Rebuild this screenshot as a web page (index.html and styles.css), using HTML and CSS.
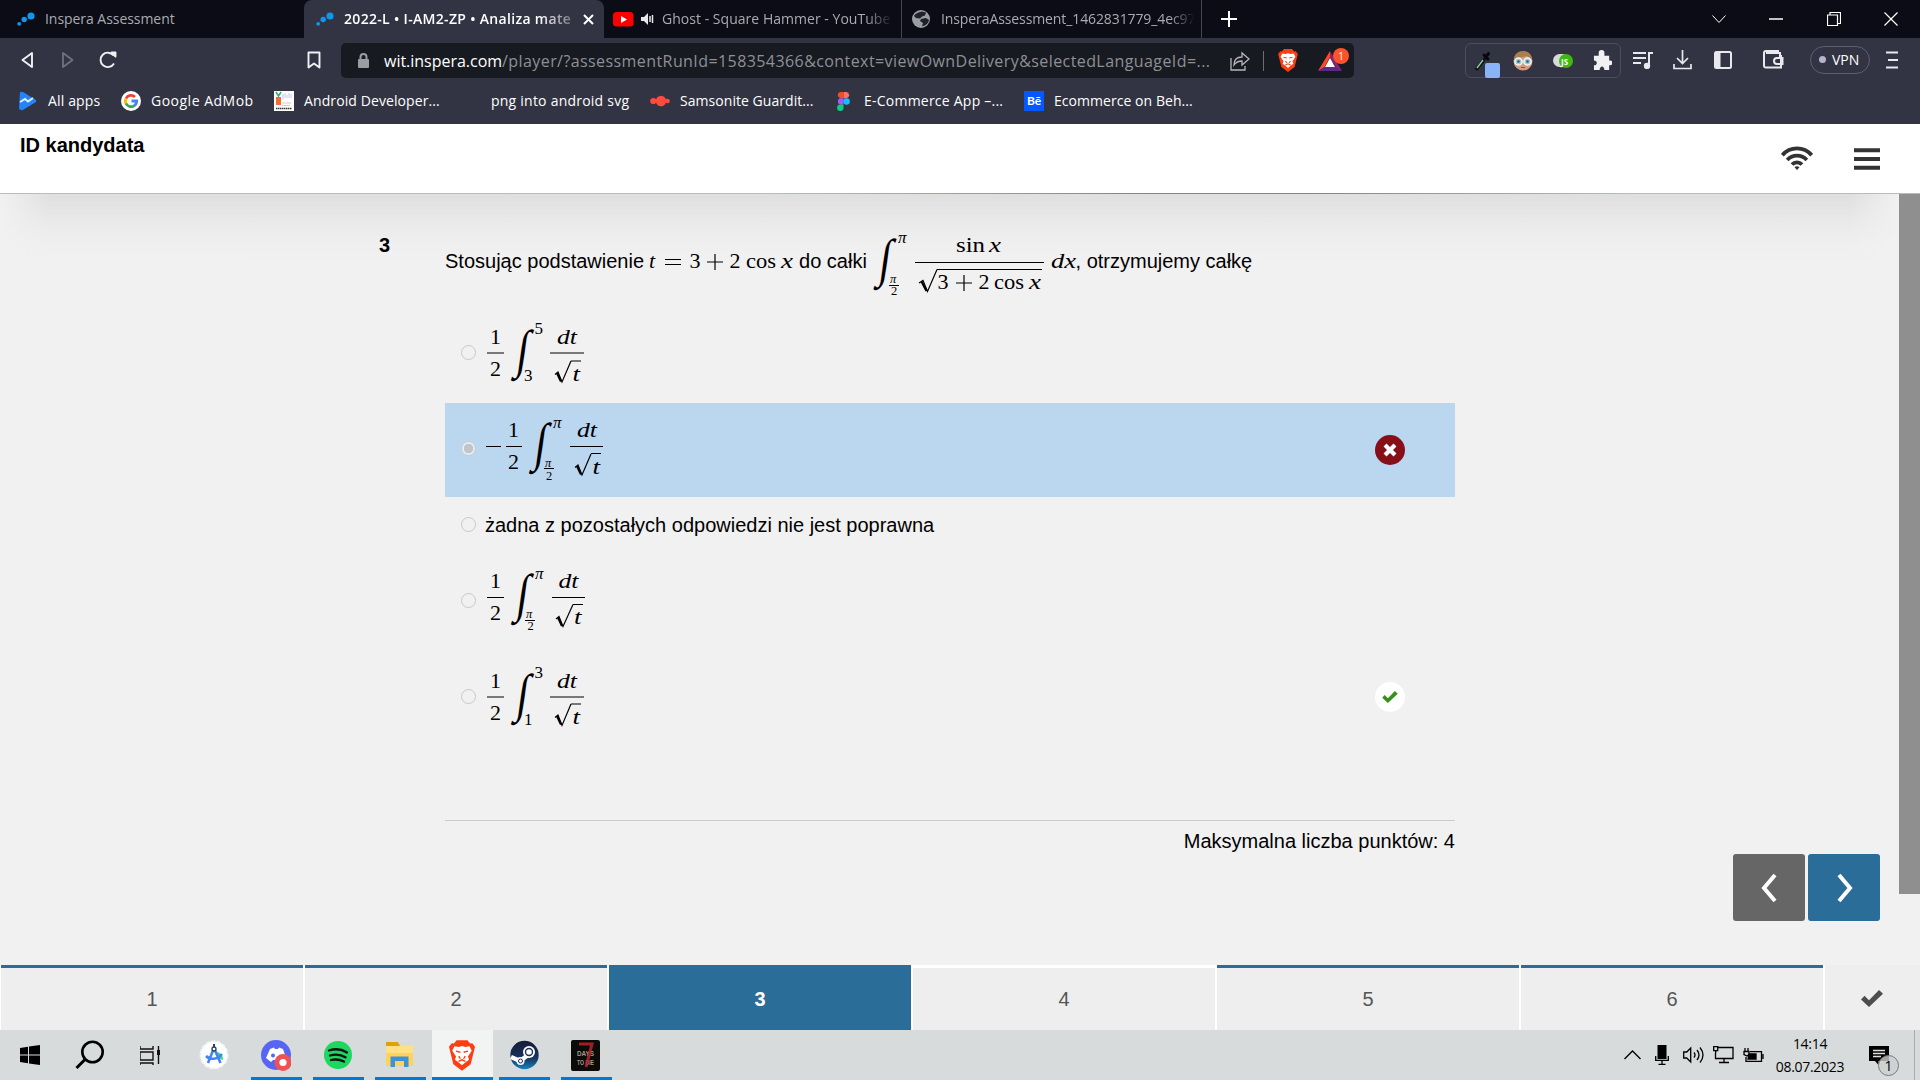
FILE: index.html
```html
<!DOCTYPE html>
<html lang="pl">
<head>
<meta charset="utf-8">
<title>Inspera Assessment</title>
<link rel="stylesheet" href="styles.css">
</head>
<body>
<svg class="defs" width="0" height="0">
  <symbol id="dots" viewBox="0 0 18 14"><circle cx="14" cy="4" r="3.6"/><circle cx="7.2" cy="7.5" r="2.7"/><circle cx="2.2" cy="11.8" r="1.9"/></symbol>
  <symbol id="lion" viewBox="0 0 24 28"><path fill="#fb3f12" d="M7 0h10l2.500 3 2-.3L24 6l-1 4-3 12-8 6-8-6L1 10 0 6l2.500-3.300 2 .3z"/><path fill="#fff" d="M5 5.500l4 .7 3-1 3 1 4-.7 2 4-3.500 5.500 1 3-3.500 2.500-3 2.500-3-2.500L5.500 18l1-3L3 9.500z"/><path fill="none" stroke="#fb3f12" stroke-width="1.300" d="M6.500 10l4 1M17.500 10l-4 1M9 14.500l1.500 2.500M15 14.500 13.500 17M8.800 19.500l3.200-1.500 3.200 1.500"/></symbol>
  <symbol id="check" viewBox="0 0 22 17"><path d="M0 9.500 3.500 5.800 8 10.200 18 0 22 3.800 8 17z"/></symbol>
</svg>

<header class="browser">
  <div class="tabs">
    <div class="tab tab-first"><svg class="dots" width="18" height="14"><use href="#dots"/></svg><span class="label">Inspera Assessment</span></div>
    <div class="tab tab-active"><svg class="dots" width="18" height="14"><use href="#dots"/></svg><span class="label">2022-L • I-AM2-ZP • Analiza mate</span>
      <svg width="11" height="11" viewBox="0 0 11 11" stroke="#fff" stroke-width="2"><path d="M1 1l9 9M10 1l-9 9"/></svg></div>
    <div class="tab tab-yt"><svg width="21" height="15"><rect width="20.500" height="14.500" rx="3.500" fill="#f00"/><path d="M8 4v7l6-3.500z" fill="#fff"/></svg>
      <svg class="speaker" width="13" height="12" viewBox="0 0 13 12"><path fill="#e8e8ea" d="M0 4h3l4-4v12L3 8H0z"/><path d="M9 3v6M11.500 2v8" stroke="#e8e8ea" stroke-width="1.500"/></svg><span class="label">Ghost - Square Hammer - YouTube</span></div>
    <div class="tab tab-file"><svg width="18" height="18"><circle cx="9" cy="9" r="9" fill="#9b9da5"/><path fill="#0b0c15" d="M10 1.500l4 1-1 3-3 1-2 2-4-.5-2-2C4 2.500 8 2 10 1.500zM9 9l5-1 3 2c-1 4-4 6-7 6l1-3-3-2z" opacity=".85"/></svg><span class="label">InsperaAssessment_1462831779_4ec97</span></div>
    <svg class="plus" width="16" height="16" stroke="#fff" stroke-width="2"><path d="M8 0v16M0 8h16"/></svg>
    <div class="window-buttons">
      <svg width="14" height="8"><path d="M.5.5 7 7.500 13.500.5"/></svg>
      <svg width="14" height="2"><path d="M0 1h14" stroke-width="1.500"/></svg>
      <svg width="14" height="14"><path d="M.5 3h10v10.500H.5zM3 3V.5h10.500v11H10.500" stroke-width="1.200"/></svg>
      <svg width="14" height="14"><path d="M.5.5l13 13M13.500.5l-13 13" stroke-width="1.200"/></svg>
    </div>
  </div>

  <div class="toolbar">
    <div class="nav-buttons">
      <svg width="12" height="18" viewBox="0 0 12 18"><path d="M11 2v14L1.500 9z"/></svg>
      <svg class="dim" width="12" height="18" viewBox="0 0 12 18"><path d="M1 2v14L10.500 9z"/></svg>
      <svg width="18" height="18" viewBox="0 0 18 18"><path d="M15 12.500A7.200 7.200 0 1 1 14.500 4.500"/><path d="M12.500 1.500h4v4z" fill="#fff"/></svg>
      <svg class="bookmark" width="14" height="18" viewBox="0 0 14 18"><path d="M1.500 1.500h11v15L7 12.500l-5.500 4z"/></svg>
    </div>
    <div class="address">
      <svg width="11" height="15" viewBox="0 0 11 15"><rect y="6" width="11" height="9" rx="1" fill="#9b9da5"/><path d="M2.500 7V4a3 3 0 0 1 6 0v3" fill="none" stroke="#9b9da5" stroke-width="2"/></svg>
      <span class="url"><b>wit.inspera.com</b>/player/?assessmentRunId=158354366&amp;context=viewOwnDelivery&amp;selectedLanguageId=...</span>
      <svg class="share" width="20" height="20" viewBox="0 0 20 20" fill="none" stroke="#b5b6bb" stroke-width="1.300"><path d="M1 7v12h14v-4"/><path d="M4 14c0-5 3-8 8-8V2l7 6-7 6v-4c-4 0-6 1-8 4z"/></svg>
      <i class="bar"></i>
      <svg class="shield" width="20" height="23"><use href="#lion"/></svg>
      <div class="rewards"><svg width="24" height="20" viewBox="0 0 24 20"><path fill="#ff4724" d="M12 0v6L6 17l-6 3z"/><path fill="#8d1d76" d="M12 0l12 20-6-3-6-10z"/><path fill="#5b2a83" d="M0 20l6-4h12l6 4z"/><path fill="#fff" d="M12 7l5 9H7z"/></svg><span class="count">1</span></div>
    </div>
    <div class="extensions">
      <div class="dropper"><svg width="20" height="22" viewBox="0 0 20 22"><path d="M3 20 13 7" stroke="#111" stroke-width="3"/><path d="M4 18l6-8" stroke="#8fd9a0" stroke-width="1.300"/><path d="M11 5l4 4M13.500 6l2-2.500" stroke="#08080c" stroke-width="3" stroke-linecap="round"/></svg><i class="swatch"></i></div>
      <svg width="20" height="20" viewBox="0 0 20 20"><circle cx="10" cy="10" r="9.500" fill="#d69b78"/><path fill="#a9804d" d="M1 9C1-3 19-3 19 9L14 5 5 7z"/><g fill="#9fc9d4" stroke="#eef7fa" stroke-width="1.500"><circle cx="5.500" cy="10.500" r="3.600"/><circle cx="14.500" cy="10.500" r="3.600"/></g><circle cx="5.500" cy="10.500" r="1.300" fill="#355e70"/><circle cx="14.500" cy="10.500" r="1.300" fill="#355e70"/><path d="M8 16.500h4" stroke="#934f3d"/></svg>
      <svg width="20" height="16" viewBox="0 0 20 16"><rect y="1" width="16" height="13" rx="6.500" fill="#d8d9d8"/><circle cx="13" cy="8" r="7" fill="#3fb90f"/><text x="8" y="11.500" class="js">JS</text></svg>
      <svg width="19" height="21" viewBox="0 0 20 22"><path fill="#f1f1f3" d="M1 6h5V3a3 3 0 0 1 6 0v3h5v5h1a2.500 2.500 0 0 1 0 5h-1v5h-5c0-5-5-5-5 0H1v-5c4 0 4-5 0-5z"/></svg>
    </div>
    <div class="tools">
      <svg class="t-music" width="21" height="18" viewBox="0 0 21 18"><path d="M0 2h13M0 7h13M0 12h8M16 14V2h4" /><circle cx="14" cy="15" r="2.200" fill="#eee"/></svg>
      <svg class="t-down" width="19" height="20" viewBox="0 0 19 20"><path d="M9.500 0v13M4 8l5.500 5.500L15 8M1 14v4.500h17V14"/></svg>
      <svg class="t-side" width="18" height="18" viewBox="0 0 18 18"><rect x="1" y="1" width="16" height="16" rx="1.500"/><path d="M4 1v16" stroke-width="5"/></svg>
      <svg class="t-wallet" width="21" height="19" viewBox="0 0 21 19"><path d="M3 3h14v3h1v11.500H3A2 2 0 0 1 1 15V3a2 2 0 0 1 2-2h12v2M19.500 8H14a2.500 2.500 0 0 0 0 6h5.500z"/></svg>
      <span class="vpn"><i></i>VPN</span>
      <svg class="t-menu" width="12" height="18" viewBox="0 0 12 18"><path d="M0 1.500h12M2 9h10M0 16.500h12"/></svg>
    </div>
  </div>

  <nav class="bookmarks">
    <a class="bm bm-apps"><svg width="18" height="20" viewBox="0 0 18 20"><path d="M1 1l3 0 13 8v2L3 19.500 0 18z" fill="#2583fa"/><path d="M1 11l5-3 3 2.500L14 7" fill="none" stroke="#dff0ff" stroke-width="2"/></svg><span>All apps</span></a>
    <a class="bm bm-admob"><svg width="20" height="20"><circle cx="10" cy="10" r="10" fill="#fff"/><g fill="none" stroke-width="2.800"><path stroke="#ea4335" d="M5 7.500a5.600 5.600 0 0 1 9-1.500"/><path stroke="#fbbc05" d="M5.200 13a5.600 5.600 0 0 1-.2-5.500"/><path stroke="#34a853" d="M13.500 14.500A5.600 5.600 0 0 1 5 12.500"/><path stroke="#4285f4" d="M10.500 10h5.200c0 2-.8 3.600-2.400 4.700"/></g></svg><span>Google AdMob</span></a>
    <a class="bm bm-dev"><svg width="20" height="20"><path fill="#fff" d="M0 0h20v20H0z"/><path fill="#f26b3a" d="M2 6h5v8H2z"/><path d="M2 1l2.500 4L7 1" fill="none" stroke="#39a96b" stroke-width="1.500"/><path d="M9 3v5M11 2v5M13 4v3M15 2v5M17 3v4" stroke="#c3cbef"/><path d="M8 12h9M8 14.500h8" stroke="#d9c9c0"/><path d="M2 17.500h16" stroke="#333" stroke-width="1.600" stroke-dasharray="1.500 .5"/></svg><span>Android Developer...</span></a>
    <a class="bm bm-png"><span>png into android svg</span></a>
    <a class="bm bm-sam"><svg width="20" height="12" fill="#ff4a3d"><circle cx="3.300" cy="6" r="3.100"/><circle cx="11" cy="6" r="5.200"/><circle cx="17.500" cy="6" r="2.300"/><path d="M2 5h15v2H2z"/></svg><span>Samsonite Guardit...</span></a>
    <a class="bm bm-figma"><svg width="13" height="19" viewBox="0 0 13 19"><path fill="#f24e1e" d="M6.500 0h-3a3.200 3.200 0 0 0 0 6.300h3z"/><path fill="#ff7262" d="M6.500 0h3a3.200 3.200 0 0 1 0 6.300h-3z"/><path fill="#a259ff" d="M6.500 6.300h-3a3.200 3.200 0 0 0 0 6.300h3z"/><circle cx="9.600" cy="9.500" r="3.200" fill="#1abcfe"/><path fill="#0acf83" d="M6.500 12.600h-3a3.200 3.200 0 1 0 3 3.200z"/></svg><span>E-Commerce App –...</span></a>
    <a class="bm bm-be"><b class="be">Bē</b><span>Ecommerce on Beh...</span></a>
  </nav>
</header>

<div class="idbar">
  <h1>ID kandydata</h1>
  <svg class="wifi" width="32" height="24" viewBox="0 0 32 24" fill="none" stroke="#333" stroke-width="3.800"><path d="M1.300 9.200C9 .1 23 .1 30.700 9.200M6.200 14c5.200-5.800 14.400-5.800 19.600 0M11 18.600c2.600-2.900 7.400-2.900 10 0"/><path d="M16 24l-2.500-2.800c1.400-1.300 3.600-1.300 5 0z" fill="#333" stroke="none"/></svg>
  <svg width="26" height="22" viewBox="0 0 26 22"><path d="M0 2.200h26M0 11h26M0 19.800h26" stroke="#333" stroke-width="4"/></svg>
</div>

<main class="page">
  <div class="content">
    <div class="question">
      <b class="number">3</b>
      <section class="body">
        <p class="prompt"><span>Stosując podstawienie</span>
          <svg class="math first" width="150" height="64" viewBox="647 233 150 64"><g class="r"><text class="it" x="649" y="268" textLength="7">t</text><text x="689.500" y="268">3</text><text x="729.500" y="268">2</text><text x="746" y="268" textLength="30" lengthAdjust="spacingAndGlyphs">cos</text><text class="it" x="781" y="268" textLength="12" lengthAdjust="spacingAndGlyphs">x</text></g><path d="M665 259.500h16M665 264.500h16M707 262h16M715 254v16"/></svg>
          <span class="do">do całki</span>
          <svg class="math" width="203" height="64" viewBox="872 233 203 64"><text class="int" transform="translate(876.500 275.500) skewX(-8) scale(.85 1.060)">∫</text><g class="s"><text class="it" x="897" y="243">π</text></g><g class="ss"><text class="it" x="889" y="283">π</text><text x="890" y="295">2</text></g><path d="M888 285.500h10M914 262.500h129M936 269.500h105M955 283h16M963 275v16"/><g class="r"><text x="955" y="252" textLength="29" lengthAdjust="spacingAndGlyphs">sin</text><text class="it" x="988" y="252" textLength="12" lengthAdjust="spacingAndGlyphs">x</text><text x="936.500" y="289">3</text><text x="977.500" y="289">2</text><text x="993" y="289" textLength="30" lengthAdjust="spacingAndGlyphs">cos</text><text class="it" x="1028" y="289" textLength="12" lengthAdjust="spacingAndGlyphs">x</text><text class="it" x="1050" y="268" textLength="25" lengthAdjust="spacingAndGlyphs">dx</text></g><path class="root" d="M918 283l4-2.500 4.500 11 9.500-22"/><path class="rootfat" d="M920.500 281.500l5 9.500"/></svg>
          <span>, otrzymujemy całkę</span></p>

        <div class="option o1"><i class="radio"></i>
          <svg class="math" width="102" height="62" viewBox="485 321.500 102 62"><g class="r"><text x="490" y="344">1</text><text x="490" y="376">2</text><text class="it" x="557" y="344" textLength="20" lengthAdjust="spacingAndGlyphs">dt</text><text class="it" x="572.500" y="381" textLength="7.500" lengthAdjust="spacingAndGlyphs">t</text></g><text class="int" transform="translate(515 367) skewX(-8) scale(.85 1.060)">∫</text><g class="s"><text x="534.500" y="334">5</text><text x="524" y="381">3</text></g><path d="M487 353.500h17M550 353.500h34M571 361.500h10"/><path class="root" d="M555 375l3-2.500 4 10 9-21"/><path class="rootfat" d="M557 373.500l4 8.500"/></svg></div>

        <div class="option o2"><i class="radio on"></i>
          <svg class="math" width="122" height="62" viewBox="485 418.500 122 62"><g class="r"><text x="508" y="437">1</text><text x="508" y="469">2</text><text class="it" x="577" y="437" textLength="20" lengthAdjust="spacingAndGlyphs">dt</text><text class="it" x="592.500" y="474" textLength="7.500" lengthAdjust="spacingAndGlyphs">t</text></g><text class="int" transform="translate(533 460) skewX(-8) scale(.85 1.060)">∫</text><g class="s"><text class="it" x="553" y="428">π</text></g><g class="ss"><text class="it" x="545" y="467">π</text><text x="546" y="480">2</text></g><path d="M486 447h15M506 447h16M570 447h33M591 454h10M544 469h10"/><path class="root" d="M575 468l3-2.500 4 10 9-21"/><path class="rootfat" d="M577 466.500l4 8.500"/></svg>
          <span class="mark wrong"><svg width="14" height="14"><path d="M3.500 3.500l7 7M10.500 3.500l-7 7" stroke="#fff" stroke-width="4.200" stroke-linecap="square"/></svg></span></div>

        <div class="option o3"><i class="radio"></i><span>żadna z pozostałych odpowiedzi nie jest poprawna</span></div>

        <div class="option o4"><i class="radio"></i>
          <svg class="math" width="102" height="64" viewBox="485 570 102 64"><g class="r"><text x="490" y="589">1</text><text x="490" y="621">2</text><text class="it" x="558.500" y="589" textLength="20" lengthAdjust="spacingAndGlyphs">dt</text><text class="it" x="574" y="625" textLength="7.500" lengthAdjust="spacingAndGlyphs">t</text></g><text class="int" transform="translate(515 612) skewX(-8) scale(.85 1.060)">∫</text><g class="s"><text class="it" x="535" y="580">π</text></g><g class="ss"><text class="it" x="526" y="619">π</text><text x="527.500" y="631">2</text></g><path d="M487 598.500h17M552 598.500h33M573 605.500h10M525 621.500h10"/><path class="root" d="M556 620l3-2.500 4 10 10-22"/><path class="rootfat" d="M558 618.500l4 8.500"/></svg></div>

        <div class="option o5"><i class="radio"></i>
          <svg class="math" width="102" height="62" viewBox="485 666.500 102 62"><g class="r"><text x="490" y="688">1</text><text x="490" y="720">2</text><text class="it" x="557" y="688" textLength="20" lengthAdjust="spacingAndGlyphs">dt</text><text class="it" x="572.500" y="724" textLength="7.500" lengthAdjust="spacingAndGlyphs">t</text></g><text class="int" transform="translate(515 711) skewX(-8) scale(.85 1.060)">∫</text><g class="s"><text x="534.500" y="678">3</text><text x="524" y="725">1</text></g><path d="M487 697.500h17M550 697.500h34M571 704.500h10"/><path class="root" d="M555 718l3-2.500 4 10.500 9-21.500"/><path class="rootfat" d="M557 716.500l4 8.500"/></svg>
          <span class="mark right"><svg width="16" height="12" fill="#37901a"><use href="#check"/></svg></span></div>

        <p class="points">Maksymalna liczba punktów: 4</p>
      </section>
    </div>
    <div class="pager">
      <button class="prev"><svg width="18" height="30" viewBox="0 0 18 30"><path d="M15 2 4 15l11 13"/></svg></button>
      <button class="next"><svg width="18" height="30" viewBox="0 0 18 30"><path d="M4 2l11 13L4 28"/></svg></button>
    </div>
  </div>
  <div class="scroll"><div class="thumb"></div></div>
</main>

<nav class="steps">
  <a class="step">1</a><a class="step">2</a><a class="step current">3</a><a class="step empty">4</a><a class="step">5</a><a class="step">6</a>
  <a class="finish"><svg width="22" height="17" fill="#4d4d4d"><use href="#check"/></svg></a>
</nav>

<footer class="taskbar">
  <div class="apps">
    <span class="sys"><svg width="20" height="20"><path d="M0 3l8-1.200V9.500H0zM9 1.600 20 0v9.500H9zM0 10.500h8v7.700L0 17zM9 10.500h11V20L9 18.400z"/></svg></span>
    <span class="sys s-search"><svg width="30" height="30" fill="none" stroke="#000"><circle cx="17.500" cy="12" r="10.200" stroke-width="2.600"/><path d="M10 19.500 1.500 28" stroke-width="3"/></svg></span>
    <span class="sys s-task"><svg width="20" height="20" fill="none" stroke="#111" stroke-width="1.400"><path d="M0 1v3h13V1M0 7h13v8H0zM0 20v-2h13v2M18.500 1v18"/><path d="M18.500 5v5" stroke-width="3"/></svg></span>
    <span class="sys s-studio"><svg width="30" height="30"><circle cx="15" cy="15" r="13.500" fill="#fff" stroke="#f4f6f6" stroke-width="2" stroke-dasharray="4 1.500"/><path fill="#3ddc84" d="M17 12a7 7 0 0 1 7 8l-6-2z"/><path d="M15 8 9 23M15 8l6.500 15M7 16c4 4 11 4 16-2" fill="none" stroke="#4285f4" stroke-width="2.600"/><path d="M15 4v5" stroke="#243f68" stroke-width="2"/><circle cx="15" cy="9" r="2" fill="#fff" stroke="#243f68" stroke-width="1.300"/></svg></span>
    <span class="app"><svg width="30" height="31"><circle cx="15" cy="15" r="15" fill="#5865f2"/><path fill="#fff" d="M9 9l4-1.500 1 1.500h3l1-1.500L22 9l3 9-4 4-2-2h-7l-2 2-5-4z"/><circle cx="12" cy="15.500" r="2" fill="#5865f2"/><circle cx="22" cy="22.500" r="8.500" fill="#ed5255"/><circle cx="22" cy="22.500" r="3.600" fill="#fff"/></svg></span>
    <span class="app"><svg width="28" height="30"><circle cx="14" cy="15" r="14" fill="#1ed760"/><path d="M5 10.500c6-2 13-1.200 18 2M6 15.500c5-1.500 11-1 15.500 1.800M7 20c4.500-1 9-.5 13 1.600" fill="none" stroke="#111" stroke-width="2.300" stroke-linecap="round"/></svg></span>
    <span class="app"><svg width="28" height="26"><path fill="#dda10f" d="M0 0h12l2 4H0z"/><path fill="#ffd35a" d="M0 4h27v20H0z"/><path fill="#ffe083" d="M0 4h27v7H0z"/><path fill="#3f91d8" d="M4.500 25V14.500h18V25h-4.500v-6h-9v6z"/></svg></span>
    <span class="app brave"><svg width="26" height="31"><use href="#lion"/></svg></span>
    <span class="app"><svg width="29" height="30"><defs><linearGradient id="sg" x2="0" y2="1"><stop offset="0" stop-color="#171d35"/><stop offset=".6" stop-color="#16335f"/><stop offset="1" stop-color="#1483be"/></linearGradient></defs><circle cx="14.500" cy="15" r="14.200" fill="url(#sg)"/><path d="M1 17l9 4 8-6" stroke="#fff" stroke-width="4.500" fill="none"/><circle cx="19" cy="12" r="6" fill="#fff"/><circle cx="19" cy="12" r="3.500" fill="#fff" stroke="#17315c" stroke-width="1.400"/><circle cx="10.500" cy="21" r="4" fill="#fff"/><circle cx="10.500" cy="21" r="2" fill="none" stroke="#17315c"/></svg></span>
    <span class="app"><svg width="30" height="31"><rect width="29" height="31" rx="2" fill="#0b0b0a"/><text class="days" x="6" y="16" textLength="17" lengthAdjust="spacingAndGlyphs">DAYS</text><text class="days" x="6" y="25" textLength="17" lengthAdjust="spacingAndGlyphs">TO DIE</text><path d="M8 4h13L15 27" fill="none" stroke="#b8252a" stroke-width="3" opacity=".85"/></svg></span>
  </div>
  <div class="tray">
    <svg class="i-up" width="17" height="10"><path d="M.5 9 8.500 1l8 8"/></svg>
    <svg class="i-mic" width="14" height="20"><path d="M2.500 0h9v14h-9z" fill="#000" stroke="none"/><path d="M.7 11v4.300h12.600V11M7 15v4M3.500 19.300h7"/></svg>
    <svg class="i-vol" width="21" height="18"><path d="M.7 6h3l4-4v14l-4-4h-3zM11 6.500q2 2.500 0 5M14 4q4 5 0 10M17 1.500q6 7.500 0 15"/></svg>
    <svg class="i-net" width="21" height="18"><path d="M5 1.500h15v11H2.500V7M11 12v4M6 16.500h10M.7.700h4v4h-4zM2.700 4v3"/></svg>
    <svg class="i-bat" width="21" height="15"><path d="M7 3.700h11.500v9.600H3V9M20 6v5M1 3.500h5v3L4 8 1 6.500zM2 0v3M5 0v3"/><path d="M6 6h7v5H5z" fill="#000"/></svg>
    <div class="clock"><span>14:14</span><span>08.07.2023</span></div>
    <div class="notice"><svg width="20" height="19"><path d="M0 0h20v15H9.500V19L6 15H0z" fill="#000" stroke="none"/><path d="M4 4.500h12M4 7.500h12M4 10.500h8" stroke="#ddd"/></svg><b>1</b></div>
    <i class="peek"></i>
  </div>
</footer>
</body>
</html>
```
FILE: styles.css
```css
* { box-sizing: border-box; }
html, body { margin: 0; width: 1920px; height: 1080px; overflow: hidden; }
body { display: flex; flex-direction: column; background: #f1f1f1; color: #000; font-family: "Liberation Sans", Arial, sans-serif; font-size: 20px; }
svg { display: block; flex: none; }
.defs { position: absolute; }
p, h1 { margin: 0; }

/* browser window */
.browser { flex: none; height: 124px; background: #323443; color: #fff; font-family: "Open Sans", "Noto Sans", sans-serif; font-size: 14px; }
.tabs { display: flex; height: 38px; background: #0b0c15; align-items: stretch; }
.tab { display: flex; align-items: center; flex: none; color: #a9abb2; white-space: nowrap; }
.tab .label { overflow: hidden; height: 22px; line-height: 21px; }
.dots { fill: #0f97ec; margin-right: 10px; }
.tab-first { width: 304px; padding-left: 17px; }
.tab-first .label { letter-spacing: -.05px; }
.tab-active { width: 300px; padding-left: 12px; background: #323443; border-radius: 8px 8px 0 0; color: #fff; font-weight: 600; }
.tab-active .label { width: 229px; margin-right: 10px; letter-spacing: .32px; mask-image: linear-gradient(90deg, #000 85%, rgba(0, 0, 0, .3)); }
.tab-yt { width: 298px; padding-left: 9px; border-right: 1px solid #44454d; }
.speaker { margin: 0 8px 0 7px; }
.tab-yt .label { width: 231px; letter-spacing: .03px; mask-image: linear-gradient(90deg, #000 88%, transparent); }
.tab-file { width: 300px; padding-left: 10px; border-right: 1px solid #44454d; }
.tab-file .label { width: 254px; margin-left: 11px; letter-spacing: -.1px; mask-image: linear-gradient(90deg, #000 90%, transparent); }
.plus { margin: 11px 0 0 19px; }
.window-buttons { display: flex; align-items: center; gap: 43.500px; margin: 0 22px 0 auto; fill: none; stroke: #fff; }

.toolbar { display: flex; align-items: flex-start; height: 45px; padding-top: 5px; }
.nav-buttons { display: flex; width: 341px; padding: 8px 0 0 21px; fill: none; stroke: #f1f1f3; stroke-width: 1.900; stroke-linejoin: round; }
.nav-buttons .dim { margin: 0 25px 0 29px; stroke: #6d6f7b; }
.nav-buttons .bookmark { margin-left: auto; margin-right: 20px; }
.address { display: flex; align-items: center; width: 1013px; height: 35px; padding-left: 17px; background: #181a21; border-radius: 5px; }
.url { flex: none; width: 838px; margin-left: 15px; color: #8e9096; font-size: 16px; white-space: nowrap; letter-spacing: .42px; }
.url b { color: #fff; font-weight: 400; letter-spacing: -.02px; }
.bar { width: 1px; height: 20px; background: #6d6e74; margin: 0 14px 0 13px; }
.share { margin-left: 8px; }
.rewards { position: relative; margin-left: 20px; }
.count { position: absolute; left: 15px; top: -3px; width: 16px; height: 16px; border-radius: 50%; background: #fb542b; font-size: 10px; line-height: 16px; text-align: center; }
.extensions { display: flex; flex: none; align-items: center; gap: 20px; width: 156px; height: 35px; margin-left: 111px; padding-left: 7px; border: 1px solid #4b4e5f; border-radius: 6px; }
.dropper { position: relative; }
.swatch { position: absolute; left: 12px; top: 13px; width: 15px; height: 15px; border-radius: 2px; background: #8ab4f8; }
.js { font: bold 8px "Open Sans", sans-serif; fill: #fff; }
.tools { display: flex; align-items: center; height: 33px; padding-left: 12px; fill: none; stroke: #e9e9ed; stroke-width: 2; }
.t-down { margin-left: 19px; stroke-width: 1.700; }
.t-side { margin-left: 22px; }
.t-wallet { margin-left: 31px; }
.vpn { display: flex; align-items: center; width: 60px; height: 28px; margin-left: 26px; padding-left: 8px; border: 1px solid #5e6070; border-radius: 14px; font-size: 14px; letter-spacing: -.05px; }
.vpn i { width: 7px; height: 7px; margin-right: 6px; border-radius: 50%; background: #b3b5cb; }
.t-menu { margin-left: 16px; }

.bookmarks { display: flex; align-items: center; height: 36px; }
.bm { display: flex; align-items: center; flex: none; white-space: nowrap; letter-spacing: .05px; }
.bm span { margin-left: 10px; padding-bottom: 2px; }
.bm-apps { width: 121px; padding-left: 19px; letter-spacing: .15px; }
.bm-apps span { margin-left: 11px; }
.bm-admob { width: 153px; letter-spacing: .5px; }
.bm-dev { width: 207px; letter-spacing: .1px; }
.bm-png { width: 169px; letter-spacing: .23px; }
.bm-sam { width: 187px; }
.bm-figma { width: 187px; letter-spacing: .23px; }
.bm-figma span { margin-left: 14px; }
.be { width: 20px; height: 20px; background: #0557ff; font: bold 12px/20px Lato, sans-serif; text-align: center; letter-spacing: 0; }

/* candidate bar */
.idbar { display: flex; flex: none; height: 70px; padding: 0 40px 0 20px; background: #fff; border-bottom: 1px solid; border-image: linear-gradient(90deg, #bbb 40%, #3d94e0 60%, #3d94e0 68%, #bbb 85%) 1; }
h1 { margin-top: 10px; font-size: 20px; line-height: 23px; }
.wifi { margin: 22px 41px 0 auto; }
.wifi + svg { margin-top: 24px; }

/* question page */
.page { display: flex; flex: none; height: 771px; }
.content { display: flex; flex: 1; flex-direction: column; justify-content: space-between; background: linear-gradient(90deg, #f1f1f1, rgba(241, 241, 241, 0) 50px, rgba(241, 241, 241, 0) 1850px, #f1f1f1), linear-gradient(#dfdfdf, #e8e8e8 24px, #efefef 48px, #f1f1f1 70px); }
.question { display: flex; padding: 39px 0 0 379px; }
.number { width: 66px; padding-top: 1px; line-height: 23px; }
.body { width: 1010px; }
.prompt { display: flex; height: 64px; white-space: pre; line-height: 57px; }
.prompt .first { margin-left: 3px; }
.do { flex: none; width: 73.500px; margin-left: 2px; }
.option { display: flex; height: 94px; padding-left: 16px; align-items: center; }
.o1 { height: 100px; margin-top: 6px; padding-bottom: 2px; }
.o2 { background: #bbd7f0; padding-bottom: 2px; }
.o3 { height: 56px; }
.o4 { height: 96px; }
.o5 { height: 96px; }
.radio { flex: none; width: 15px; height: 15px; margin-right: 9px; border: 1px solid #c9c9c9; border-radius: 50%; }
.option:not(.o1) .radio { margin-bottom: 2px; }
.on { border: 1px solid #c9ccd0; background: radial-gradient(circle, #c0c6cc 4.500px, #e4ebf2 5px); }
.math { overflow: visible; fill: none; stroke: #000; stroke-width: 1.200; }
.math text { stroke: none; fill: #000; font-family: "Liberation Serif", "Times New Roman", serif; }
.r { font-size: 22px; }
.s { font-size: 17px; }
.ss { font-size: 12.500px; }
.math .it { font-style: italic; }
.math .int { font-family: "Liberation Serif", serif; font-size: 50px; }
.root { stroke-width: 1.200; }
.rootfat { stroke-width: 2.200; }
.mark { display: flex; align-items: center; justify-content: center; width: 30px; height: 30px; margin: 1px 50px 0 auto; border-radius: 50%; background: #fff; }
.wrong { background: #860f18; }
.right { margin-top: 0; margin-bottom: 1px; }
.points { margin-top: 75px; padding-top: 9px; border-top: 1px solid #ccc; line-height: 23px; text-align: right; }
.pager { display: flex; justify-content: flex-end; gap: 3px; padding: 0 19px 44px; }
.pager button { display: flex; align-items: center; justify-content: center; width: 72px; height: 67px; padding: 0; border: 0; border-radius: 3px; background: #666; fill: none; stroke: #fff; stroke-width: 4; }
.pager .next { background: #2a6d98; }
.scroll { width: 21px; background: #f1f1f1; }
.thumb { height: 700px; background: #8f8f8f; }

/* question navigation */
.steps { display: flex; flex: none; height: 65px; padding-left: 1px; gap: 2px; background: #fff; color: #555; }
.step { flex: none; width: 302px; border-top: 3px solid #2a6d98; background: #eee; line-height: 62px; text-align: center; }
.current { background: #2a6d98; color: #fff; font-weight: 700; }
.empty { border-color: #fff; }
.finish { display: flex; flex: 1; align-items: center; justify-content: center; padding: 2px 1px 0 0; background: #eee; }

/* desktop taskbar */
.taskbar { display: flex; flex: none; height: 50px; background: #d8dbdb; justify-content: space-between; }
.apps { display: flex; }
.sys { display: flex; align-items: center; margin-left: 20px; }
.s-search { margin-left: 35px; }
.s-task { margin-left: 35px; }
.s-studio { margin-left: 39px; margin-right: 22px; }
.app { display: flex; align-items: center; justify-content: center; width: 51px; height: 50px; margin-right: 11px; border-bottom: 3px solid #0078d7; padding: 3px 1px 0 0; }
.brave { width: 61px; margin: 0 6px 0 -5px; background: #f1f4f3; }
.days { font: bold 8px "Liberation Sans", sans-serif; fill: #a49b86; }
.tray { display: flex; align-items: center; fill: none; stroke: #000; stroke-width: 1.300; }
.i-mic { margin-left: 14px; }
.i-vol { margin-left: 14px; }
.i-net { margin-left: 9px; }
.i-bat { margin-left: 9px; }
.clock { display: flex; flex-direction: column; align-items: center; width: 70px; margin: 0 24px 1px 11px; font: 14px/23px "Open Sans", sans-serif; letter-spacing: -.3px; }
.notice { position: relative; }
.notice b { position: absolute; left: 9px; top: 9px; width: 21px; height: 21px; border: 1px solid #777; border-radius: 50%; background: rgba(205, 207, 208, .8); font: 14px/19px "Open Sans", sans-serif; text-align: center; }
.peek { width: 1px; height: 50px; margin: 0 5px 0 25px; background: #a8abab; }
```
